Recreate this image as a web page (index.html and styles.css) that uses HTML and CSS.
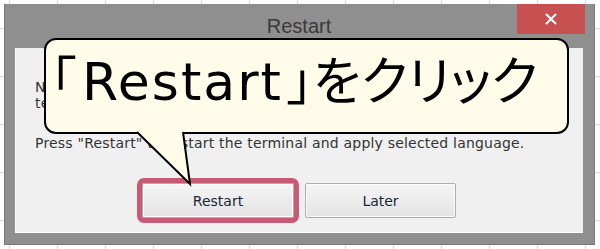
FILE: index.html
```html
<!DOCTYPE html>
<html lang="ja">
<head>
    <meta charset="UTF-8">
    <meta name="viewport" content="width=device-width, initial-scale=1.0">
    <title>Restart</title>
    <link rel="stylesheet" href="styles.css">
</head>
<body>

<div class="window">
    <div class="titlebar">
        <span></span>
        <span class="title">Restart</span>
        <button class="close-btn" aria-label="Close">
            <svg width="12" height="12" viewBox="0 0 12 12">
                <path d="M1.5 1.5 L10.5 10.5 M10.5 1.5 L1.5 10.5" stroke="#fff" stroke-width="2" stroke-linecap="round"/>
            </svg>
        </button>
    </div>

    <div class="client">
        <p class="message">New language settings will be applied after restart of the<br>terminal.</p>
        <p class="message">Press "Restart" to restart the terminal and apply selected language.</p>
        <div class="buttons">
            <button class="btn btn-focus">Restart</button>
            <button class="btn">Later</button>
        </div>
    </div>

    <!-- annotation balloon over the dialog -->
    <div class="callout">
        <span class="callout-text">「<span class="latin">Restart</span>」をクリック</span>
        <svg class="callout-tail" width="64" height="56" viewBox="0 0 64 56">
            <polygon points="3,0 56,52 49,0" fill="#fffdea"/>
            <path d="M3 0 L56 52 L49 0" fill="none" stroke="#000" stroke-width="2" stroke-linejoin="miter"/>
        </svg>
    </div>
</div>

</body>
</html>
```

FILE: styles.css
```css
html, body {
    margin: 0;
    padding: 0;
}

body {
    width: 600px;
    height: 249px;
    overflow: hidden;
    background-color: #fff;
    background-image:
        linear-gradient(to right, #dadada 1px, transparent 1px),
        linear-gradient(to bottom, #dadada 1px, transparent 1px);
    background-size: 48px 48px;
    background-position: 9px 28px;
    font-family: "DejaVu Sans", Tahoma, sans-serif;
}

.window {
    position: relative;
    box-sizing: border-box;
    width: 591px;
    height: 241px;
    margin: 4px 0 0 4px;
    padding: 0 11px 11px 10px;
    background: #8f8f8f;
    border: 1px solid #777;
    border-top: none;
    display: flex;
    flex-direction: column;
}

.titlebar {
    height: 44px;
    display: grid;
    grid-template-columns: 1fr auto 1fr;
    align-items: start;
}

.title {
    margin-top: 12px;
    font-family: "Liberation Sans", Arial, sans-serif;
    font-size: 20px;
    line-height: 1;
    color: #3a3a3a;
}

.close-btn {
    justify-self: end;
    width: 68px;
    height: 30px;
    margin-right: -2px;
    padding: 0;
    border: none;
    background: #c75050;
    display: flex;
    align-items: center;
    justify-content: center;
}

.client {
    flex: 1;
    background: #f0f0f0;
    border-left: 1px solid #fff;
    border-bottom: 1px solid #fff;
    padding-top: 31px;
}

.message {
    margin: 0 0 24px 19px;
    font-size: 14px;
    line-height: 16px;
    letter-spacing: 0.2px;
    color: #333;
}

.buttons {
    display: flex;
    justify-content: center;
    gap: 11px;
    margin-top: 32px;
    padding-right: 1px;
}

.btn {
    box-sizing: border-box;
    width: 151px;
    height: 35px;
    border: 1px solid #adadad;
    border-radius: 2px;
    background: linear-gradient(#f5f5f5, #e3e3e3);
    box-shadow: inset 0 0 0 1px #fcfcfc;
    font-family: "DejaVu Sans", Tahoma, sans-serif;
    font-size: 14px;
    color: #1a2637;
}

.btn-focus {
    width: 152px;
    outline: 5px solid #c75b74;
}

.callout {
    position: absolute;
    left: 39px;
    top: 34px;
    box-sizing: border-box;
    width: 525px;
    height: 96px;
    padding: 12px 0 0 4px;
    background: #fffdea;
    border: 2px solid #000;
    border-radius: 12px;
}

.callout-text {
    display: block;
    font-family: "Noto Sans CJK JP", "Noto Sans", sans-serif;
    font-size: 52px;
    line-height: 1;
    color: #000;
    font-feature-settings: "palt";
    white-space: nowrap;
}

.callout-text .latin {
    font-family: "DejaVu Sans", sans-serif;
    letter-spacing: 2px;
    margin: 0 4px 0 6px;
}

.callout-tail {
    position: absolute;
    left: 88px;
    top: 92px;
    overflow: visible;
}
```
